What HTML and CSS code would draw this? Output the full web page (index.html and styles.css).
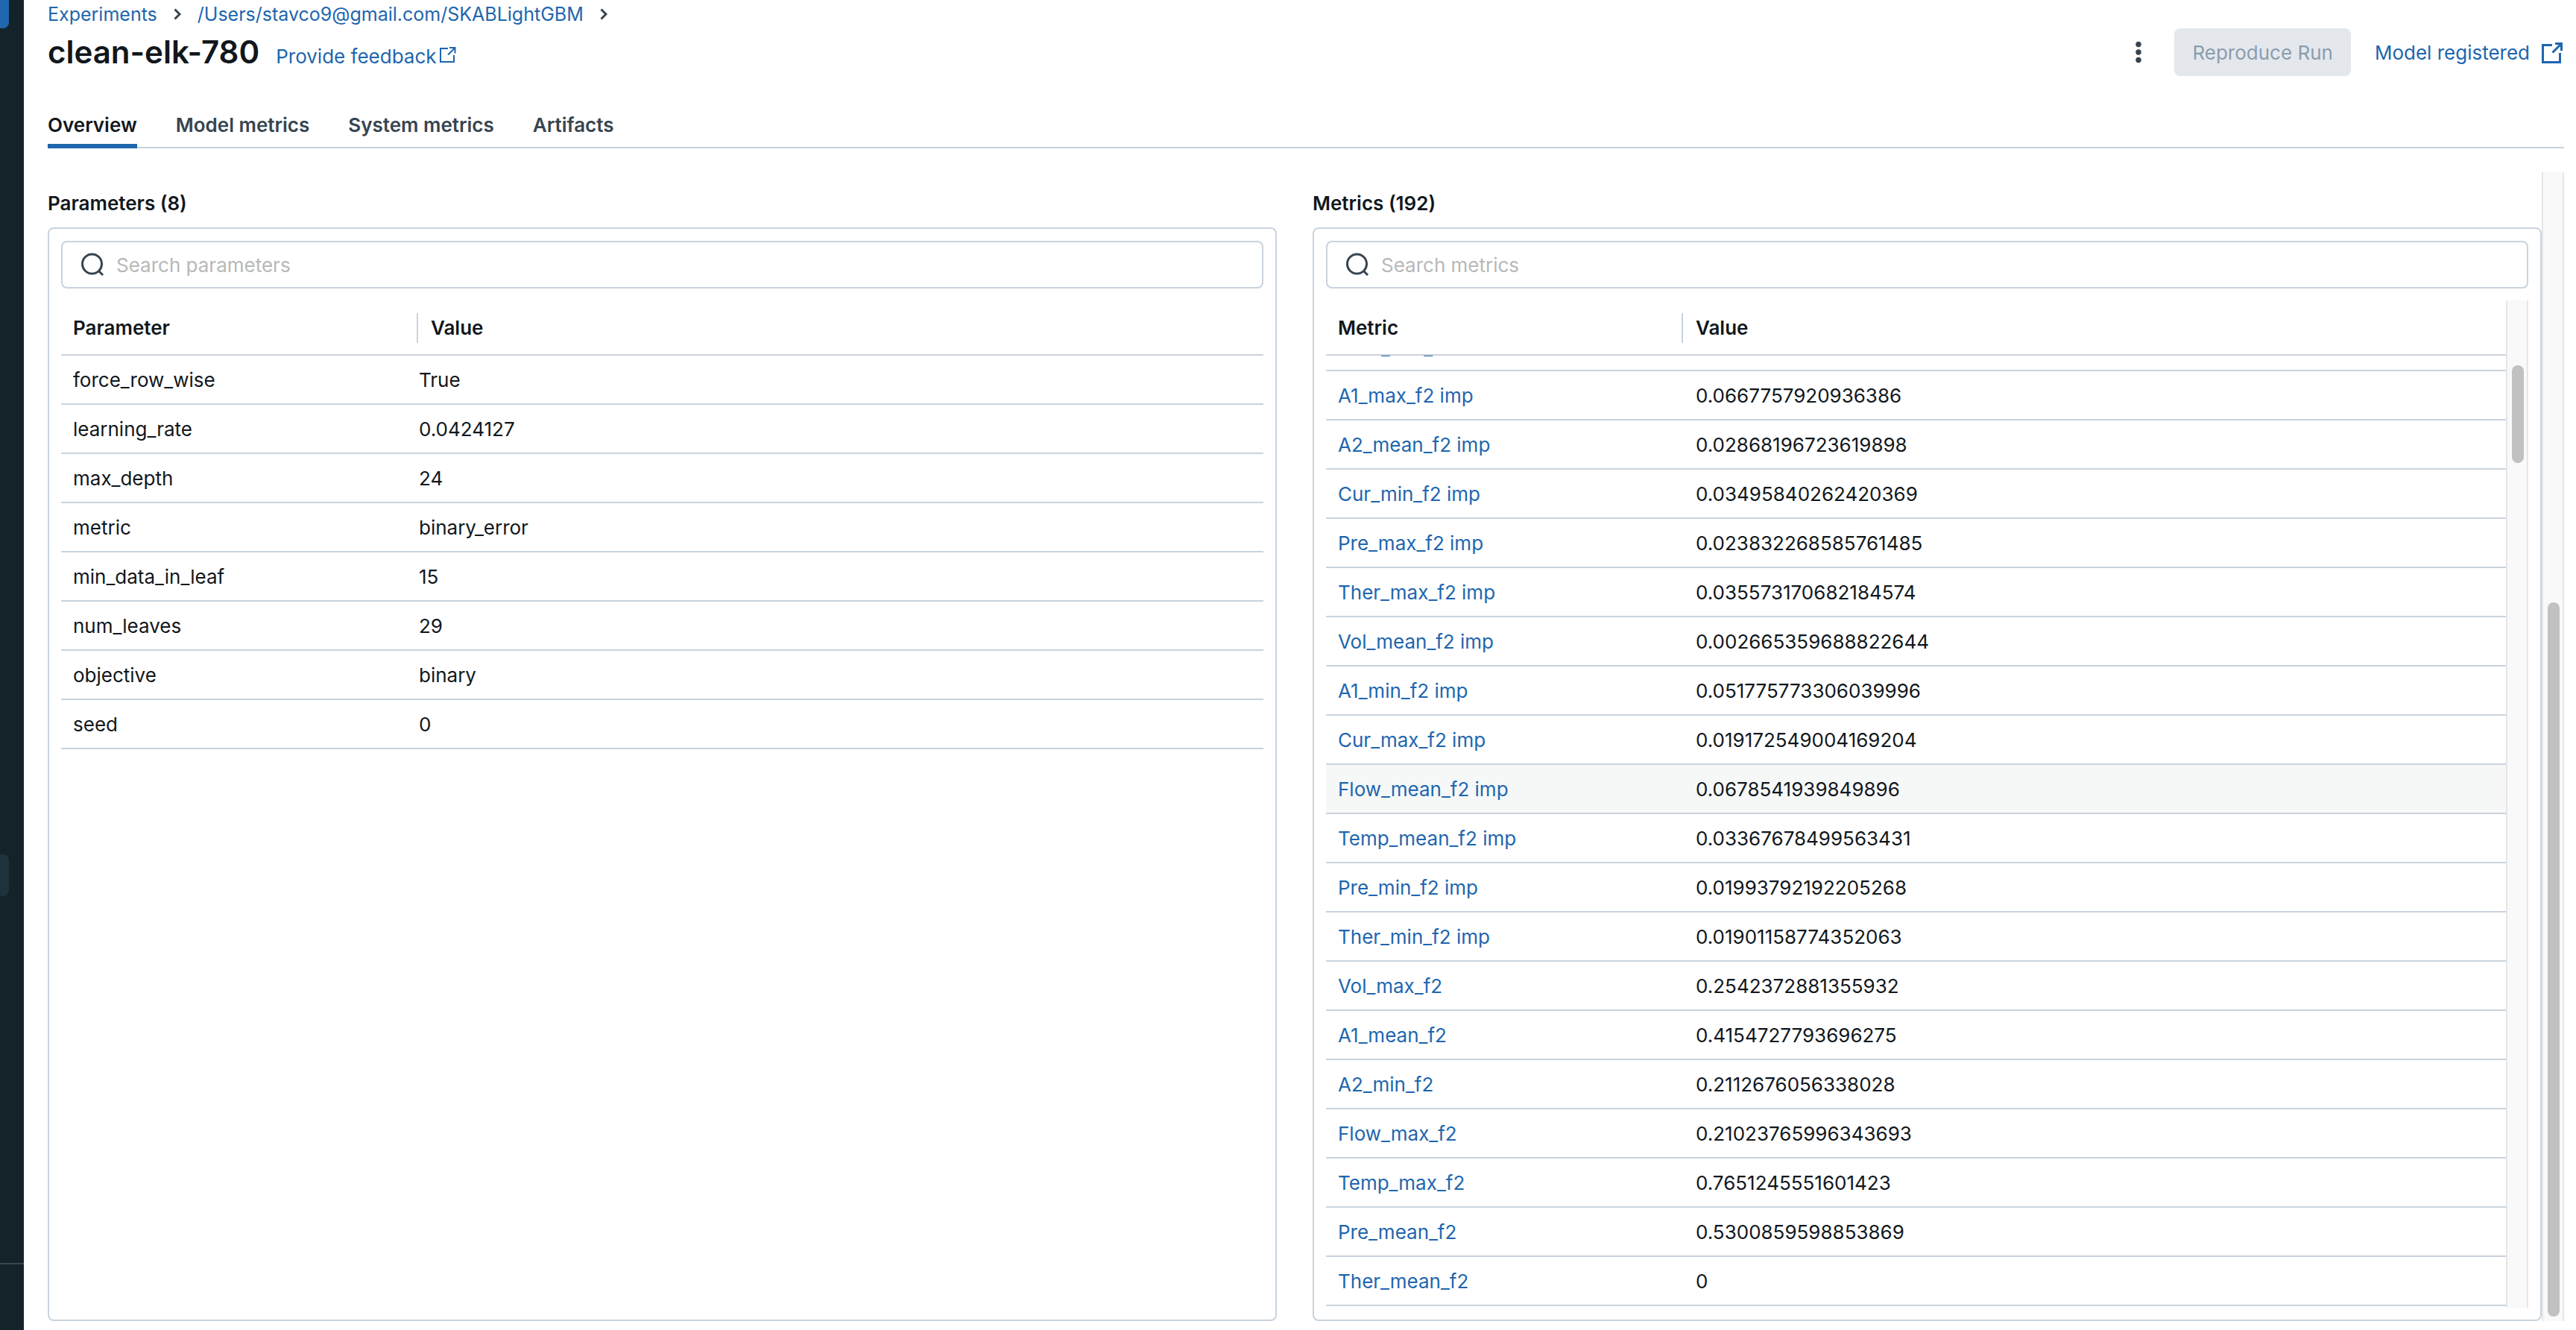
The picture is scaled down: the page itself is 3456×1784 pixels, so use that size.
FILE: index.html
```html
<!DOCTYPE html>
<html lang="en">
<head>
<meta charset="utf-8">
<title>clean-elk-780</title>
<link rel="stylesheet" href="styles.css">
</head>
<body>
<div class="app">
  <nav class="sidebar" aria-label="Workspace">
    <div class="side-item side-primary"></div>
    <div class="side-item side-current"></div>
    <div class="side-footer"></div>
  </nav>
  <main class="page">
    <nav class="crumbs" aria-label="Breadcrumb">
      <a href="#">Experiments</a>
      <svg class="chevron" viewBox="0 0 10 16"><path d="M1.500 1.500 8 8l-6.500 6.500"/></svg>
      <a href="#">/Users/stavco9@gmail.com/SKABLightGBM</a>
      <svg class="chevron" viewBox="0 0 10 16"><path d="M1.500 1.500 8 8l-6.500 6.500"/></svg>
    </nav>
    <header class="header">
      <div class="heading">
        <h1>clean-elk-780</h1>
        <a class="feedback" href="#">Provide feedback<svg class="ext-small" viewBox="0 0 22 22"><path d="M11 3H1v18h18v-9"/><path d="M13 2h7.500v7.500M20 2.500 11 11.500"/></svg></a>
      </div>
      <div class="actions">
        <button class="kebab" type="button" aria-label="More actions"><svg viewBox="0 0 8 30"><circle cx="4" cy="4.500" r="3.700"/><circle cx="4" cy="15" r="3.700"/><circle cx="4" cy="25.500" r="3.700"/></svg></button>
        <button class="reproduce" type="button" disabled>Reproduce Run</button>
        <a class="registered" href="#">Model registered<svg class="ext" viewBox="0 0 30 30"><path d="M14 4.500H1.500v23h23V15"/><path d="M18 2.500h8.500V12M26 3 14.500 14.500"/></svg></a>
      </div>
    </header>
    <nav class="tabs" aria-label="Run sections">
      <a class="tab active" href="#">Overview</a>
      <a class="tab" href="#">Model metrics</a>
      <a class="tab" href="#">System metrics</a>
      <a class="tab" href="#">Artifacts</a>
    </nav>
    <div class="body">
      <div class="columns">
        <section class="column">
          <h2>Parameters (8)</h2>
          <div class="card">
            <label class="search">
              <svg viewBox="0 0 32 32"><circle cx="15.500" cy="15" r="13"/><path d="m24.500 24.500 5.500 5.500"/></svg>
              <input type="text" placeholder="Search parameters" aria-label="Search parameters">
            </label>
            <div class="table-area">
              <table class="params">
                <thead><tr><th class="name">Parameter</th><th><span>Value</span></th></tr></thead>
                <tbody>
                  <tr><td>force_row_wise</td><td>True</td></tr>
                  <tr><td>learning_rate</td><td>0.0424127</td></tr>
                  <tr><td>max_depth</td><td>24</td></tr>
                  <tr><td>metric</td><td>binary_error</td></tr>
                  <tr><td>min_data_in_leaf</td><td>15</td></tr>
                  <tr><td>num_leaves</td><td>29</td></tr>
                  <tr><td>objective</td><td>binary</td></tr>
                  <tr><td>seed</td><td>0</td></tr>
                </tbody>
              </table>
            </div>
          </div>
        </section>
        <section class="column">
          <h2>Metrics (192)</h2>
          <div class="card">
            <label class="search">
              <svg viewBox="0 0 32 32"><circle cx="15.500" cy="15" r="13"/><path d="m24.500 24.500 5.500 5.500"/></svg>
              <input type="text" placeholder="Search metrics" aria-label="Search metrics">
            </label>
            <div class="table-area">
              <table>
                <thead><tr><th class="name">Metric</th><th><span>Value</span></th></tr></thead>
                <tbody>
                  <tr class="cut"><td><div><a href="#">Flow_min_f2</a></div></td><td></td></tr>
                  <tr><td><a href="#">A1_max_f2 imp</a></td><td>0.0667757920936386</td></tr>
                  <tr><td><a href="#">A2_mean_f2 imp</a></td><td>0.02868196723619898</td></tr>
                  <tr><td><a href="#">Cur_min_f2 imp</a></td><td>0.03495840262420369</td></tr>
                  <tr><td><a href="#">Pre_max_f2 imp</a></td><td>0.023832268585761485</td></tr>
                  <tr><td><a href="#">Ther_max_f2 imp</a></td><td>0.035573170682184574</td></tr>
                  <tr><td><a href="#">Vol_mean_f2 imp</a></td><td>0.002665359688822644</td></tr>
                  <tr><td><a href="#">A1_min_f2 imp</a></td><td>0.051775773306039996</td></tr>
                  <tr><td><a href="#">Cur_max_f2 imp</a></td><td>0.019172549004169204</td></tr>
                  <tr class="hovered"><td><a href="#">Flow_mean_f2 imp</a></td><td>0.0678541939849896</td></tr>
                  <tr><td><a href="#">Temp_mean_f2 imp</a></td><td>0.03367678499563431</td></tr>
                  <tr><td><a href="#">Pre_min_f2 imp</a></td><td>0.01993792192205268</td></tr>
                  <tr><td><a href="#">Ther_min_f2 imp</a></td><td>0.01901158774352063</td></tr>
                  <tr><td><a href="#">Vol_max_f2</a></td><td>0.2542372881355932</td></tr>
                  <tr><td><a href="#">A1_mean_f2</a></td><td>0.4154727793696275</td></tr>
                  <tr><td><a href="#">A2_min_f2</a></td><td>0.2112676056338028</td></tr>
                  <tr><td><a href="#">Flow_max_f2</a></td><td>0.21023765996343693</td></tr>
                  <tr><td><a href="#">Temp_max_f2</a></td><td>0.7651245551601423</td></tr>
                  <tr><td><a href="#">Pre_mean_f2</a></td><td>0.5300859598853869</td></tr>
                  <tr><td><a href="#">Ther_mean_f2</a></td><td>0</td></tr>
                </tbody>
              </table>
              <div class="track"><div class="thumb"></div></div>
            </div>
          </div>
        </section>
      </div>
      <div class="track track-page"><div class="thumb"></div></div>
    </div>
  </main>
</div>
</body>
</html>
```
FILE: styles.css
```css
:root {
  --text: #11171c;
  --muted: #37444f;
  --link: #1e66ae;
  --line: #c9d3dd;
}

* { box-sizing: border-box; }

body {
  margin: 0;
  background: #fff;
  color: var(--text);
  font: 26px/40px Inter, "Noto Sans", sans-serif;
}

a { color: var(--link); text-decoration: none; }
h1, h2 { margin: 0; font-weight: 600; }
svg { display: block; flex: none; fill: none; stroke: currentColor; }
button, input { font: inherit; }

.app { display: flex; min-height: 100vh; }

/* Dark workspace rail */
.sidebar {
  display: flex;
  flex-direction: column;
  flex: none;
  width: 32px;
  background: #142329;
}
.side-item { width: 12px; }
.side-primary { height: 38px; background: #2067ad; border-radius: 0 0 8px 0; }
.side-current { height: 56px; margin-top: 1108px; background: #1f323b; border-radius: 0 8px 8px 0; }
.side-footer { height: 90px; margin-top: auto; border-top: 2px solid #38464e; }

.page { flex: 1; min-width: 0; padding: 0 16px 12px 32px; display: flex; flex-direction: column; }

.crumbs { display: flex; align-items: center; gap: 22px; font-size: 25px; line-height: 38px; }
.chevron { width: 10px; height: 16px; color: var(--muted); stroke-width: 3; }

.header { display: flex; justify-content: space-between; align-items: center; height: 64px; }
.heading { display: flex; align-items: baseline; gap: 22px; }
h1 { font-size: 42px; line-height: 60px; }
.feedback { display: flex; gap: 4px; }
.ext-small { width: 22px; height: 22px; margin-top: 6px; stroke-width: 2; }
.actions { display: flex; align-items: center; }
.kebab { padding: 0; margin-right: 44px; border: 0; background: none; color: var(--muted); }
.kebab svg { width: 8px; height: 30px; fill: currentColor; stroke: none; }
.reproduce { height: 64px; margin-right: 32px; padding: 2px 24px 0; border: 0; border-radius: 8px; background: #e4e8ed; color: #8a9dad; }
.registered { display: flex; align-items: center; gap: 16px; padding-top: 2px; }
.ext { width: 30px; height: 30px; stroke-width: 3; }

.tabs { display: flex; gap: 52px; margin-top: 46px; border-bottom: 2px solid var(--line); }
.tab { padding-bottom: 5px; margin-bottom: -2px; border-bottom: 6px solid transparent; color: var(--muted); font-weight: 600; }
.tab.active { color: var(--text); border-color: var(--link); }

.body { display: flex; flex: 1; margin-top: 32px; }
.columns { display: flex; flex: 1; gap: 48px; min-width: 0; }
.column { display: flex; flex-direction: column; flex: 1; min-width: 0; padding-top: 22px; }
h2 { margin-bottom: 12px; font-size: 26px; }
.card { display: flex; flex-direction: column; flex: 1; gap: 16px; padding: 16px; border: 2px solid var(--line); border-radius: 8px; }

.search { display: flex; align-items: center; gap: 16px; height: 64px; padding: 0 24px; border: 2px solid var(--line); border-radius: 8px; }
.search svg { width: 32px; height: 32px; color: var(--muted); stroke-width: 3; }
.search input { flex: 1; min-width: 0; padding: 2px 0 0; border: 0; outline: 0; background: none; color: var(--text); }
.search input::placeholder { color: #b8b8b8; opacity: 1; }

.table-area { display: flex; align-items: flex-start; }
table { flex: 1; border-collapse: separate; border-spacing: 0; table-layout: fixed; width: 100%; min-width: 0; margin-bottom: 2px; }
th { height: 74px; padding: 2px 0 0; border-bottom: 2px solid var(--line); text-align: left; font-weight: 600; }
.name { width: 480px; padding-left: 16px; }
th span { display: block; margin-left: -3px; padding-left: 17px; border-left: 2px solid var(--line); }
td { height: 66px; padding: 13px 16px 11px; border-bottom: 2px solid var(--line); }
.params td + td { padding-left: 0; }
.hovered td { background: #f6f8f8; }

/* Row that has scrolled most of the way under the header */
.cut td { height: 21px; padding: 0 16px; }
.cut div { display: flex; flex-direction: column; justify-content: flex-end; height: 19px; overflow: hidden; }
.cut a { padding-bottom: 9px; }

.track { align-self: stretch; flex: none; width: 30px; padding: 6px; border: solid #e6e6e6; border-width: 0 2px; background: #f9f9f9; }
.thumb { width: 16px; height: 131px; margin-top: 81px; border-radius: 8px; background: #c1c1c1; }
.track-page { display: flex; flex-direction: column; }
.track-page .thumb { flex: 1; height: auto; margin-top: 571px; }
```
